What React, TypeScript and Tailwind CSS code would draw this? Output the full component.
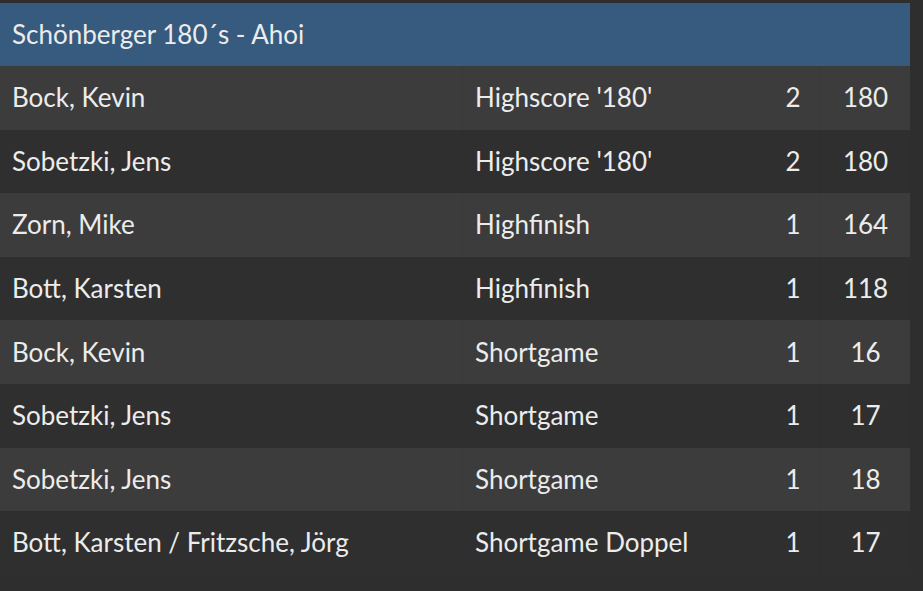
const rows = [
  { name: 'Bock, Kevin', type: "Highscore '180'", count: 2, value: 180 },
  { name: 'Sobetzki, Jens', type: "Highscore '180'", count: 2, value: 180 },
  { name: 'Zorn, Mike', type: 'Highfinish', count: 1, value: 164 },
  { name: 'Bott, Karsten', type: 'Highfinish', count: 1, value: 118 },
  { name: 'Bock, Kevin', type: 'Shortgame', count: 1, value: 16 },
  { name: 'Sobetzki, Jens', type: 'Shortgame', count: 1, value: 17 },
  { name: 'Sobetzki, Jens', type: 'Shortgame', count: 1, value: 18 },
  { name: 'Bott, Karsten / Fritzsche, Jörg', type: 'Shortgame Doppel', count: 1, value: 17 },
];

export default function App() {
  return (
    <div
      className="min-h-screen bg-[#2e2e2e] pt-[3px] pr-[13px] text-[26px] text-[#ececec]"
      style={{ fontFamily: 'Lato, "Noto Sans", sans-serif' }}
    >
      <div className="w-[910px]">
        {/* Header */}
        <div className="h-[63px] bg-[#375a7f] flex items-center px-3">
          Schönberger 180´s - Ahoi
        </div>

        {/* Rows */}
        {rows.map((r, i) => (
          <div
            key={i}
            className={`h-[63.6px] flex items-center ${i % 2 === 0 ? 'bg-[#3c3c3c]' : 'bg-[#2f2f2f]'}`}
          >
            <div className="w-[462px] pl-3 whitespace-nowrap">{r.name}</div>
            <div className="w-[304px] pl-[12px] h-full flex items-center border-l border-black/[0.04] whitespace-nowrap">{r.type}</div>
            <div className="w-[54px] h-full flex items-center justify-center">{r.count}</div>
            <div className="flex-1 h-full flex items-center justify-center border-l border-black/[0.04]">{r.value}</div>
          </div>
        ))}
      </div>
    </div>
  );
}
